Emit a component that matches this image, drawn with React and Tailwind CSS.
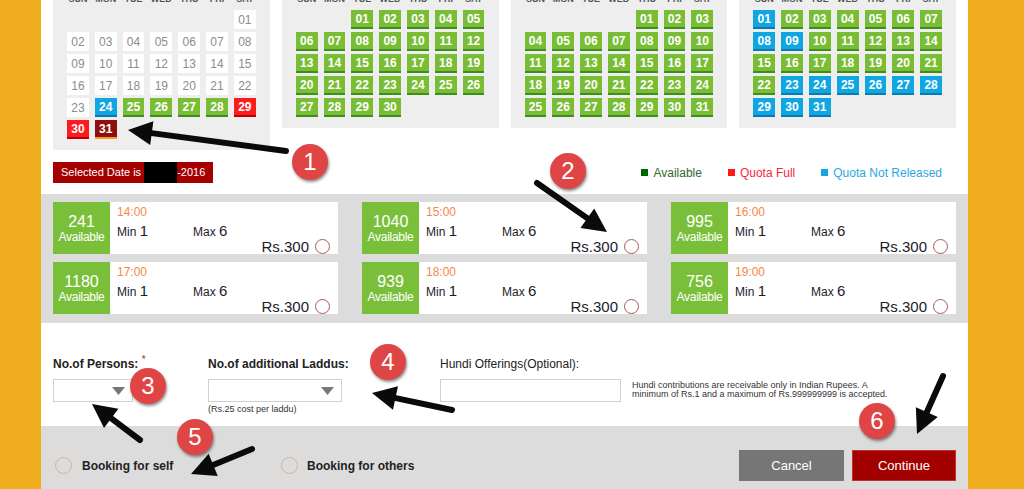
import React from "react";

const DAYS = ["SUN", "MON", "TUE", "WED", "THU", "FRI", "SAT"];

const cellStyles = {
  past: "bg-white text-[#8c8c8c] font-normal",
  green: "bg-[#79bd35] border-b-2 border-[#3e8e1c] text-white font-bold",
  blue: "bg-[#0fa6e2] border-b-2 border-[#0a7cb0] text-white font-bold",
  red: "bg-[#fd1c1c] border-b-2 border-[#b80000] text-white font-bold",
  sel: "bg-[#8f0e0e] border-b-2 border-[#f2a21e] text-white font-bold",
};

const months = [
  {
    start: 6,
    days: 31,
    status: (d) => (d <= 23 ? "past" : d === 24 ? "blue" : d <= 28 ? "green" : d <= 30 ? "red" : "sel"),
  },
  { start: 2, days: 30, status: () => "green" },
  { start: 4, days: 31, status: () => "green" },
  { start: 0, days: 31, status: (d) => ([1, 8, 9].includes(d) || d >= 23 ? "blue" : "green") },
];

const slots = [
  { n: 241, t: "14:00" },
  { n: 1040, t: "15:00" },
  { n: 995, t: "16:00" },
  { n: 1180, t: "17:00" },
  { n: 939, t: "18:00" },
  { n: 756, t: "19:00" },
];

// annotations drawn on top of the screenshot
const arrows = [
  [286, 151, 128, 130],
  [537, 183, 607, 232],
  [140, 440, 92, 404],
  [452, 410, 372, 393],
  [252, 449, 191, 474],
  [943, 376, 917, 434],
];

const badges = [
  { n: 1, x: 310, y: 162 },
  { n: 2, x: 568, y: 171 },
  { n: 3, x: 148, y: 386 },
  { n: 4, x: 388, y: 362 },
  { n: 5, x: 195, y: 437 },
  { n: 6, x: 877, y: 421 },
];

function pad(d) {
  return d < 10 ? "0" + d : "" + d;
}

function Month({ m }) {
  const blanks = Array.from({ length: m.start });
  const days = Array.from({ length: m.days }, (_, i) => i + 1);
  return (
    <div className="bg-[#eeeeee] px-[14px] pt-[6px] pb-[11px]">
      <div className="grid grid-cols-7 gap-x-[6px] mb-[4px]">
        {DAYS.map((d) => (
          <div key={d} className="h-[14px] text-center text-[9px] leading-[14px] font-bold text-[#555]">
            {d}
          </div>
        ))}
      </div>
      <div className="grid grid-cols-7 gap-x-[6px] gap-y-[3px]">
        {blanks.map((_, i) => (
          <div key={"b" + i} />
        ))}
        {days.map((d) => (
          <div
            key={d}
            className={`h-[19px] flex items-center justify-center text-[12px] leading-none ${cellStyles[m.status(d)]}`}
          >
            {pad(d)}
          </div>
        ))}
      </div>
    </div>
  );
}

function Slot({ s }) {
  return (
    <div className="flex h-[52px] bg-white">
      <div className="w-[57px] bg-[#7abf3a] flex flex-col items-center justify-center text-white">
        <div className="text-[16px] leading-[17px]">{s.n}</div>
        <div className="text-[12px] leading-[14px] tracking-tight">Available</div>
      </div>
      <div className="flex-1 flex flex-col pl-[7px] pr-[8px] pt-[3px] text-[#1c1c2a]">
        <div className="text-[12px] leading-[15px] text-[#f7874a]">{s.t}</div>
        <div className="flex mt-[3px] h-[16px] items-center">
          <div className="w-[76px] text-[12px]">
            Min <span className="text-[15px]">1</span>
          </div>
          <div className="text-[12px]">
            Max <span className="text-[15px]">6</span>
          </div>
        </div>
        <div className="flex h-[16px] items-center justify-end gap-[6px]">
          <span className="text-[15px] leading-none">Rs.300</span>
          <span className="w-[15px] h-[15px] rounded-full border-[1.5px] border-[#a85a5a]" />
        </div>
      </div>
    </div>
  );
}

function Select({ w }) {
  return (
    <div className={`relative h-[23px] border border-[#d0d0d0] bg-white ${w}`}>
      <svg className="absolute right-[7px] top-[7px]" width="13" height="8" viewBox="0 0 13 8">
        <path d="M0 0 L13 0 L6.5 8 Z" fill="#777" />
      </svg>
    </div>
  );
}

function Arrow({ a }) {
  const [x1, y1, x2, y2] = a;
  const dx = x2 - x1;
  const dy = y2 - y1;
  const len = Math.hypot(dx, dy);
  const ux = dx / len;
  const uy = dy / len;
  const hl = 24;
  const hw = 12;
  const bx = x2 - ux * hl;
  const by = y2 - uy * hl;
  const pts = `${x2},${y2} ${bx - uy * hw},${by + ux * hw} ${bx + uy * hw},${by - ux * hw}`;
  return (
    <g>
      <line x1={x1} y1={y1} x2={bx + ux * 2} y2={by + uy * 2} stroke="#0a0a0a" strokeWidth="6" strokeLinecap="round" />
      <polygon points={pts} fill="#0a0a0a" />
    </g>
  );
}

export default function App() {
  return (
    <div className="relative w-[1024px] h-[489px] overflow-hidden bg-[#f0ae1f] font-['Liberation_Sans',Arial,sans-serif]">
      <div className="ml-[41px] w-[927px] h-full bg-white flex flex-col">
        {/* calendars */}
        <div className="grid grid-cols-4 gap-x-[12px] px-[12px] items-start mt-[-14px]">
          {months.map((m, i) => (
            <Month key={i} m={m} />
          ))}
        </div>

        {/* selected date + legend */}
        <div className="flex items-center justify-between px-[12px] mt-[12px] pr-[26px]">
          <div className="flex items-center h-[21px] w-[160px] bg-[#a50000] text-white text-[11px] whitespace-nowrap pl-[8px]">
            <span>Selected Date is&nbsp;</span>
            <span className="inline-block w-[33px] h-[21px] bg-black" />
            <span>-2016</span>
          </div>
          <div className="flex items-center gap-[26px] text-[12px]">
            <div className="flex items-center gap-[5px] text-[#2d6b1f]">
              <span className="w-[7px] h-[7px] bg-[#006400]" />
              Available
            </div>
            <div className="flex items-center gap-[5px] text-[#f5253a]">
              <span className="w-[7px] h-[7px] bg-[#ff1a1a]" />
              Quota Full
            </div>
            <div className="flex items-center gap-[5px] text-[#2aa8e0]">
              <span className="w-[7px] h-[7px] bg-[#15a6e2]" />
              Quota Not Released
            </div>
          </div>
        </div>

        {/* time slots */}
        <div className="mt-[11px] bg-[#dcdcdc] px-[12px] pt-[8px] pb-[9px] grid grid-cols-3 gap-x-[24px] gap-y-[8px]">
          {slots.map((s) => (
            <Slot key={s.t} s={s} />
          ))}
        </div>

        {/* form */}
        <div className="flex px-[12px] pt-[34px] h-[103px] text-[#222]">
          <div className="w-[155px]">
            <div className="text-[12px] leading-[14px] font-bold">
              No.of Persons: <sup className="text-[#c02020] font-normal text-[10px]">*</sup>
            </div>
            <div className="mt-[8px]">
              <Select w="w-[80px]" />
            </div>
          </div>
          <div className="w-[232px]">
            <div className="text-[12px] leading-[14px] font-bold">No.of additional Laddus:</div>
            <div className="mt-[8px]">
              <Select w="w-[134px]" />
            </div>
            <div className="text-[9px] leading-[12px] mt-[1px] text-[#333]">(Rs.25 cost per laddu)</div>
          </div>
          <div className="w-[192px]">
            <div className="text-[12px] leading-[14px]">Hundi Offerings(Optional):</div>
            <div className="mt-[8px] h-[23px] w-[181px] border border-[#d0d0d0]" />
          </div>
          <div className="pt-[24px] text-[9px] leading-[9px] text-[#333]">
            Hundi contributions are receivable only in Indian Rupees. A
            <br />
            minimum of Rs.1 and a maximum of Rs.999999999 is accepted.
          </div>
        </div>

        {/* bottom bar */}
        <div className="flex-1 bg-[#dcdcdc] flex items-center pt-[22px] pb-[6px] pl-[14px] pr-[12px]">
          <div className="flex items-center gap-[10px] w-[226px]">
            <span className="w-[17px] h-[17px] rounded-full border-[1.5px] border-[#e0b08a]" />
            <span className="text-[12px] font-bold text-[#222]">Booking for self</span>
          </div>
          <div className="flex items-center gap-[9px]">
            <span className="w-[17px] h-[17px] rounded-full border-[1.5px] border-[#e0b08a]" />
            <span className="text-[12px] font-bold text-[#222]">Booking for others</span>
          </div>
          <div className="ml-auto flex gap-[8px]">
            <button className="w-[105px] h-[31px] bg-[#777676] text-white text-[13px]">Cancel</button>
            <button className="w-[104px] h-[31px] bg-[#a30000] border border-[#c03030] text-white text-[13px]">
              Continue
            </button>
          </div>
        </div>
      </div>

      {/* annotation overlay */}
      <svg className="absolute inset-0 pointer-events-none" width="1024" height="489">
        {arrows.map((a, i) => (
          <Arrow key={i} a={a} />
        ))}
      </svg>
      {badges.map((b) => (
        <div
          key={b.n}
          className="absolute w-[36px] h-[36px] -ml-[18px] -mt-[18px] rounded-full bg-[#e04545] text-white text-[24px] leading-[36px] text-center shadow-[1px_2px_3px_rgba(0,0,0,0.45)]"
          style={{ left: b.x, top: b.y }}
        >
          {b.n}
        </div>
      ))}
    </div>
  );
}
